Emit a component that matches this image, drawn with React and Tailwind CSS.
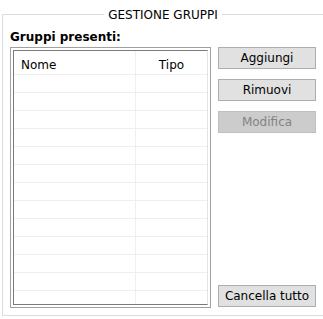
import React from "react";

const rows = Array.from({ length: 13 });

const font = { fontFamily: "'DejaVu Sans', Verdana, sans-serif" };

function Btn({ children, disabled }) {
  return (
    <button
      disabled={disabled}
      className={
        disabled
          ? "h-[22px] w-[98px] border border-[#bfbfbf] bg-[#cccccc] text-[12px] leading-none text-[#838383]"
          : "h-[22px] w-[98px] border border-[#adadad] bg-[#e1e1e1] text-[12px] leading-none text-black"
      }
    >
      {children}
    </button>
  );
}

export default function App() {
  return (
    <div className="w-[323px] h-[319px] bg-white px-[2px] pt-[7px]" style={font}>
      <fieldset className="h-[309px] border border-[#dcdcdc] px-[7px] pb-[6px]">
        <legend className="mx-auto px-[4px] pt-[1px] text-[12px] leading-[14px] text-black">GESTIONE GRUPPI</legend>
        <div className="mt-[8px] text-[12px] font-bold leading-[14px] text-black">Gruppi presenti:</div>
        <div className="mt-[3px] flex gap-[7px]">
          <div className="h-[261px] w-[201px] border border-[#a0a0a0] p-[2px]">
            <div className="h-full overflow-hidden border-l border-t border-[#7a7a7a] border-r-[#e3e3e3] border-r border-b border-b-[#7a7a7a]">
              <div className="flex h-[24px] border-b border-[#efefef] text-[12px] leading-[14px] text-black">
                <div className="w-[122px] border-r border-[#efefef] pl-[7px] pt-[7px]">Nome</div>
                <div className="flex-1 pt-[7px] text-center">Tipo</div>
              </div>
              {rows.map((_, i) => (
                <div key={i} className="flex h-[18px] border-b border-[#efefef]">
                  <div className="w-[122px] border-r border-[#efefef]" />
                  <div className="flex-1" />
                </div>
              ))}
            </div>
          </div>
          <div className="flex h-[261px] flex-col gap-[10px] pb-[1px]">
            <Btn>Aggiungi</Btn>
            <Btn>Rimuovi</Btn>
            <Btn disabled>Modifica</Btn>
            <div className="mt-auto">
              <Btn>Cancella tutto</Btn>
            </div>
          </div>
        </div>
      </fieldset>
    </div>
  );
}
